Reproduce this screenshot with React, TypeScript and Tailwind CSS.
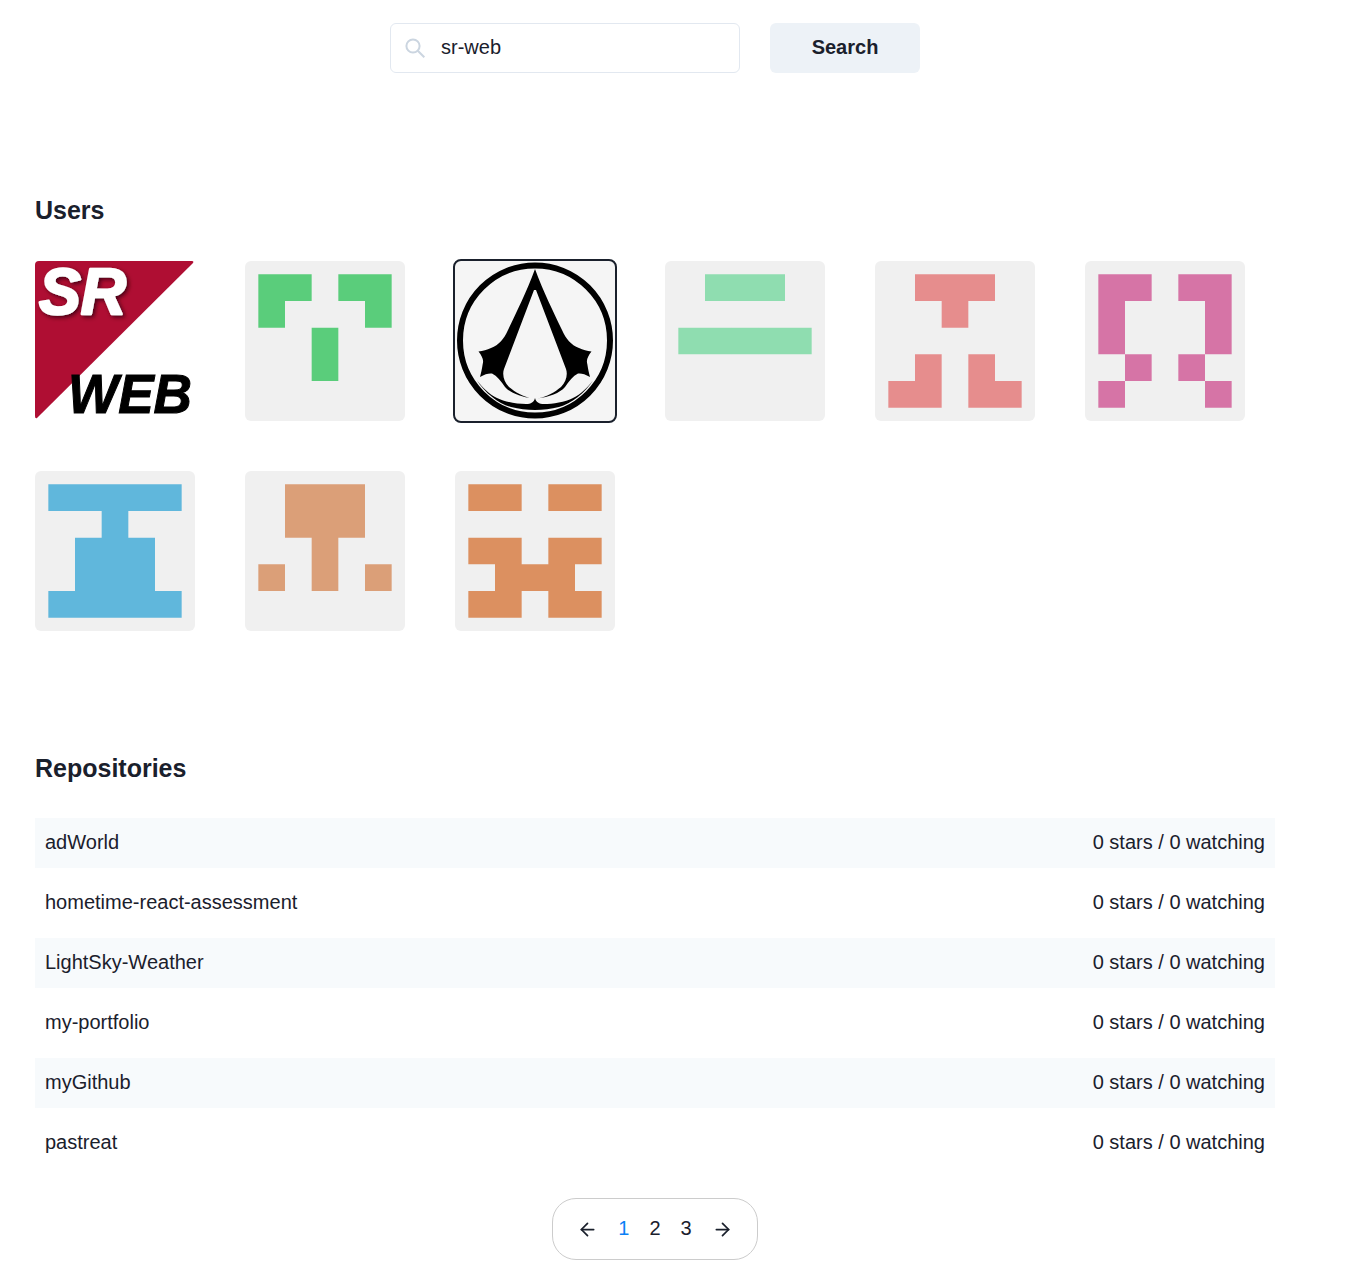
import { ArrowLeft, ArrowRight } from "lucide-react";

// github style identicons, 5x5 cells, one string per row
const identicons: { color: string; cells: string[] }[] = [
  { color: "#5acd7b", cells: ["11011", "10001", "00100", "00100", "00000"] },
  { color: "#8fddb0", cells: ["01110", "00000", "11111", "00000", "00000"] },
  { color: "#e68d8d", cells: ["01110", "00100", "00000", "01010", "11011"] },
  { color: "#d674a6", cells: ["11011", "10001", "10001", "01010", "10001"] },
  { color: "#60b7dc", cells: ["11111", "00100", "01110", "01110", "11111"] },
  { color: "#db9f78", cells: ["01110", "01110", "00100", "10101", "00000"] },
  { color: "#dc9060", cells: ["11011", "00000", "11011", "01110", "11011"] },
];

const repos = ["adWorld", "hometime-react-assessment", "LightSky-Weather", "my-portfolio", "myGithub", "pastreat"];

function Identicon({ color, cells }: { color: string; cells: string[] }) {
  // merge cells per row so neighbours don't show seams
  const d = cells
    .map((row, r) =>
      row.split("").map((c, i) => (c === "1" ? `M${35 + i * 70} ${35 + r * 70}h70v70h-70z` : "")).join("")
    )
    .join("");
  return (
    <svg viewBox="0 0 420 420" className="w-40 h-40 rounded-md bg-[#f0f0f0]">
      <path d={d} fill={color} />
    </svg>
  );
}

function SrWebLogo() {
  return (
    <svg viewBox="0 0 160 160" className="w-40 h-40 overflow-visible">
      <defs>
        <filter id="srShadow" x="-20%" y="-20%" width="140%" height="140%">
          <feDropShadow dx="2" dy="2" stdDeviation="2" floodColor="#4a0514" />
        </filter>
      </defs>
      <path d="M4 0 H157 Q159 0 158 2 L2 157 Q0 158 0 155 V4 Q0 0 4 0 Z" fill="#af0e33" />
      <text x="4" y="53" textLength="87" lengthAdjust="spacingAndGlyphs" fontFamily="Liberation Sans" fontWeight="700" fontStyle="italic" fontSize="64" fill="#fff" stroke="#fff" strokeWidth="2.5" strokeLinejoin="round" filter="url(#srShadow)">SR</text>
      <text transform="translate(33 152) scale(1 1.04)" textLength="124" lengthAdjust="spacingAndGlyphs" fontFamily="Liberation Sans" fontWeight="700" fontStyle="italic" fontSize="53" fill="#000" stroke="#000" strokeWidth="1">WEB</text>
    </svg>
  );
}

function AssassinLogo() {
  return (
    <svg viewBox="0 0 160 160" className="w-40 h-40 rounded-md bg-[#f5f5f5] outline-2 outline-[#1a202c]">
      <circle cx="80" cy="79.5" r="75" fill="none" stroke="#000" strokeWidth="6" />
      <path
        d="M80 8 C72 30 61 52 53 69 C49 78 44 84 36 87 C32 89 28 90 23.5 90.5 C27 95 29 99 27.7 103 C27 108 26 112 25 116 C30 113 34 112 37 112.5 C42 115 46 120 50 126 C55 132 66 136 78 137.5 C68 136 60 131 54 126 C49 121 47 114 49 108 L79 29 H81 L111 108 C113 114 111 121 106 126 C100 131 92 136 82 137.5 C94 136 105 132 110 126 C114 120 118 115 123 112.5 C126 112 130 113 135 116 C134 112 133 108 132.3 103 C131 99 133 95 136.5 90.5 C132 90 128 89 124 87 C116 84 111 78 107 69 C99 52 88 30 80 8 Z"
        fill="#000"
      />
      <path
        d="M21.7 119 C28 127 34 133 42 137 C50 141 62 143 71 143 C76 143 79 141 80 137 C81 141 84 143 89 143 C98 143 110 141 118 137 C126 133 132 127 138.3 119 C130 132 116 143 104 146 C96 148 88 149 80 149 C72 149 64 148 56 146 C44 143 30 132 21.7 119 Z"
        fill="#000"
      />
    </svg>
  );
}

function SearchIcon() {
  return (
    <svg viewBox="0 0 20 20" className="w-5 h-5 shrink-0" fill="none" stroke="#cbd5e0" strokeWidth="2">
      <circle cx="8" cy="8" r="6.6" />
      <path d="M12.8 12.8 L19.3 19.3" />
    </svg>
  );
}

export default function App() {
  return (
    <div className="w-[1240px] ml-[35px] pt-[23px] pb-[19px] text-[#1a202c] text-xl font-['Liberation_Sans',sans-serif]">
      <div className="flex justify-center gap-[30px]">
        <div className="w-[350px] h-[50px] flex items-center gap-4 pl-[14px] border border-[#e2e8f0] rounded-md bg-white">
          <SearchIcon />
          <input readOnly value="sr-web" className="flex-1 min-w-0 pb-0.5 outline-none text-xl text-[#1a202c]" />
        </div>
        <button className="w-[150px] h-[50px] pb-0.5 rounded-md bg-[#edf2f7] font-bold">Search</button>
      </div>

      <h2 className="mt-[123px] text-[25px] font-bold leading-7">Users</h2>
      <div className="mt-[37px] flex flex-wrap gap-[50px]">
        <SrWebLogo />
        <Identicon {...identicons[0]} />
        <AssassinLogo />
        {identicons.slice(1).map((icon) => (
          <Identicon key={icon.color} {...icon} />
        ))}
      </div>

      <h2 className="mt-[123px] text-[25px] font-bold leading-7">Repositories</h2>
      <ul className="mt-9 flex flex-col gap-[10px]">
        {repos.map((name, i) => (
          <li key={name} className={`h-[50px] px-[10px] pb-0.5 flex items-center justify-between ${i % 2 === 0 ? "bg-[#f7fafc]" : ""}`}>
            <span>{name}</span>
            <span>0 stars / 0 watching</span>
          </li>
        ))}
      </ul>

      <div className="mt-[30px] flex justify-center">
        <nav className="w-[206px] h-[62px] flex items-center justify-center gap-5 border border-[#cccccc] rounded-3xl">
          <ArrowLeft size={21} className="mt-px" />
          <span className="pb-0.5 text-[#0b80f5]">1</span>
          <span className="pb-0.5">2</span>
          <span className="pb-0.5">3</span>
          <ArrowRight size={21} className="mt-px" />
        </nav>
      </div>
    </div>
  );
}
